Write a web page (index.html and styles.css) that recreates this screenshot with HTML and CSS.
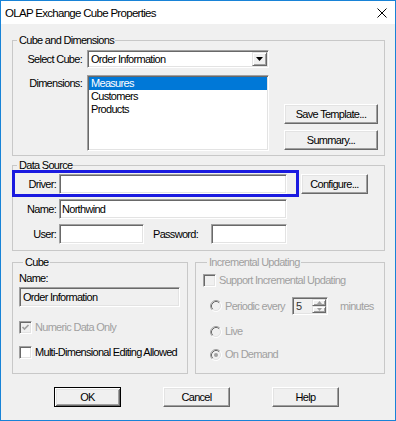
FILE: index.html
```html
<!DOCTYPE html>
<html lang="en">
<head>
  <meta charset="UTF-8" />
  <title>OLAP Exchange Cube Properties</title>
  <link rel="stylesheet" href="styles.css">
</head>
<body>
  <div class="window">
    <div class="titlebar">
      <span class="title">OLAP Exchange Cube Properties</span>
      <svg class="close" width="10" height="10" viewBox="0 0 10 10">
        <path d="M0.5 0.5L9.5 9.5M9.5 0.5L0.5 9.5" stroke="#000" stroke-width="1" fill="none"/>
      </svg>
    </div>

    <div class="client">
      <fieldset class="group group-dims">
        <legend>Cube and Dimensions</legend>
        <div class="dims">
          <div class="dims-grid">
            <label class="lbl">Select Cube:</label>
            <div class="combo sunken">
              <span class="combo-text">Order Information</span>
              <span class="combo-btn raised">
                <svg width="7" height="4" viewBox="0 0 7 4"><path d="M0 0H7L3.5 4Z" fill="#000"/></svg>
              </span>
            </div>
            <label class="lbl lbl-top">Dimensions:</label>
            <ul class="listbox sunken">
              <li class="selected">Measures</li>
              <li>Customers</li>
              <li>Products</li>
            </ul>
          </div>
          <div class="side-buttons">
            <button class="btn btn-wide">Save Template...</button>
            <button class="btn btn-wide">Summary...</button>
          </div>
        </div>
      </fieldset>

      <fieldset class="group group-source">
        <legend>Data Source</legend>
        <div class="source-grid">
          <label class="lbl">Driver:</label>
          <input class="field sunken" type="text" value="">
          <button class="btn btn-configure">Configure...</button>

          <label class="lbl">Name:</label>
          <input class="field sunken" type="text" value="Northwind">
          <span></span>

          <label class="lbl">User:</label>
          <div class="user-row">
            <input class="field field-user sunken" type="text" value="">
            <label class="lbl-pass">Password:</label>
            <input class="field field-pass sunken" type="password" value="">
          </div>
        </div>
      </fieldset>

      <div class="lower">
        <fieldset class="group group-cube">
          <legend>Cube</legend>
          <div class="cube-name">Name:</div>
          <div class="field field-ro sunken">Order Information</div>
          <div class="check-row check-first disabled">
            <span class="check sunken off">
              <svg width="9" height="9" viewBox="0 0 9 9"><path d="M1.5 4L3.5 6L7.5 2" stroke="#a0a0a0" stroke-width="1.7" fill="none"/></svg>
            </span>
            <span>Numeric Data Only</span>
          </div>
          <div class="check-row check-second">
            <span class="check sunken"></span>
            <span>Multi-Dimensional Editing Allowed</span>
          </div>
        </fieldset>

        <fieldset class="group group-inc disabled">
          <legend>Incremental Updating</legend>
          <div class="check-row">
            <span class="check sunken off"></span>
            <span>Support Incremental Updating</span>
          </div>
          <div class="radio-row radio-periodic">
            <svg class="radio" width="12" height="12" viewBox="0 0 12 12">
              <circle cx="6" cy="6" r="5" fill="#f0f0f0"/>
              <path d="M2.11 9.89A5.5 5.5 0 0 1 9.89 2.11" stroke="#a0a0a0" fill="none"/>
              <path d="M9.89 2.11A5.5 5.5 0 0 1 2.11 9.89" stroke="#fff" fill="none"/>
              <path d="M2.82 9.18A4.5 4.5 0 0 1 9.18 2.82" stroke="#696969" fill="none"/>
              <path d="M9.18 2.82A4.5 4.5 0 0 1 2.82 9.18" stroke="#e3e3e3" fill="none"/>
            </svg>
            <span class="periodic-text">Periodic every</span>
            <div class="spin sunken">
              <span class="spin-value">5</span>
              <span class="spin-btns">
                <span class="spin-btn raised"><svg width="5" height="3" viewBox="0 0 5 3"><path d="M0 3H5L2.5 0Z" fill="#a0a0a0"/></svg></span>
                <span class="spin-btn raised"><svg width="5" height="3" viewBox="0 0 5 3"><path d="M0 0H5L2.5 3Z" fill="#a0a0a0"/></svg></span>
              </span>
            </div>
            <span class="minutes">minutes</span>
          </div>
          <div class="radio-row">
            <svg class="radio" width="12" height="12" viewBox="0 0 12 12">
              <circle cx="6" cy="6" r="5" fill="#f0f0f0"/>
              <path d="M2.11 9.89A5.5 5.5 0 0 1 9.89 2.11" stroke="#a0a0a0" fill="none"/>
              <path d="M9.89 2.11A5.5 5.5 0 0 1 2.11 9.89" stroke="#fff" fill="none"/>
              <path d="M2.82 9.18A4.5 4.5 0 0 1 9.18 2.82" stroke="#696969" fill="none"/>
              <path d="M9.18 2.82A4.5 4.5 0 0 1 2.82 9.18" stroke="#e3e3e3" fill="none"/>
            </svg>
            <span>Live</span>
          </div>
          <div class="radio-row">
            <svg class="radio" width="12" height="12" viewBox="0 0 12 12">
              <circle cx="6" cy="6" r="5" fill="#f0f0f0"/>
              <path d="M2.11 9.89A5.5 5.5 0 0 1 9.89 2.11" stroke="#a0a0a0" fill="none"/>
              <path d="M9.89 2.11A5.5 5.5 0 0 1 2.11 9.89" stroke="#fff" fill="none"/>
              <path d="M2.82 9.18A4.5 4.5 0 0 1 9.18 2.82" stroke="#696969" fill="none"/>
              <path d="M9.18 2.82A4.5 4.5 0 0 1 2.82 9.18" stroke="#e3e3e3" fill="none"/>
              <circle cx="6" cy="6" r="2" fill="#a0a0a0"/>
            </svg>
            <span>On Demand</span>
          </div>
        </fieldset>
      </div>

      <div class="actions">
        <button class="btn btn-action btn-default">OK</button>
        <button class="btn btn-action">Cancel</button>
        <button class="btn btn-action">Help</button>
      </div>
    </div>

    <!-- annotation frame around the Driver row -->
    <div class="highlight"></div>
  </div>
</body>
</html>
```

FILE: styles.css
```css
:root {
  --face: #f0f0f0;
  --light: #e3e3e3;
  --shadow: #a0a0a0;
  --dark: #696969;
  --accent: #1883d7;
  --select: #0078d7;
  --disabled: #a0a0a0;
  --group-line: #c8c8c8;
}

* {
  margin: 0;
  padding: 0;
  box-sizing: border-box;
}

html, body {
  width: 396px;
  height: 421px;
  overflow: hidden;
}

body {
  font-family: "Liberation Sans", Arial, sans-serif;
  font-size: 11px;
  letter-spacing: -0.7px;
  color: #000;
  background: #fff;
}

.window {
  position: relative;
  width: 396px;
  height: 421px;
  border: 1px solid var(--accent);
  background: var(--face);
  display: flex;
  flex-direction: column;
}

.titlebar {
  height: 23px;
  flex-shrink: 0;
  background: #fff;
  display: flex;
  align-items: center;
  justify-content: space-between;
  padding: 0 8px 0 4px;
}

.title {
  font-size: 11.5px;
  line-height: 14px;
}

.client {
  display: flex;
  flex-direction: column;
  padding: 10px 10px 0 11px;
}

/* 3d edges */
.sunken {
  border: 1px solid;
  border-color: var(--shadow) #fff #fff var(--shadow);
  box-shadow: inset 1px 1px 0 var(--dark), inset -1px -1px 0 var(--light);
}

.raised {
  border: 1px solid;
  border-color: var(--light) var(--dark) var(--dark) var(--light);
  box-shadow: inset 1px 1px 0 #fff, inset -1px -1px 0 var(--shadow);
  background: var(--face);
}

/* group boxes */
.group {
  border: 1px solid var(--group-line);
  min-width: 0;
}

.group legend {
  margin-left: 4px;
  padding: 0 1px 0 2px;
  line-height: 13px;
}

.lbl {
  text-align: right;
  line-height: 13px;
  align-self: center;
  white-space: nowrap;
}

.lbl-top {
  align-self: start;
  padding-top: 2px;
}

/* cube and dimensions */
.group-dims {
  padding: 3px 0 4px 0;
}

.dims {
  display: flex;
}

.dims-grid {
  display: grid;
  grid-template-columns: 69px 182px;
  column-gap: 5px;
  row-gap: 7px;
}

.combo {
  height: 18px;
  background: #fff;
  display: flex;
  align-items: center;
  justify-content: space-between;
  padding: 1px;
}

.combo-text {
  padding-left: 2px;
  line-height: 13px;
}

.combo-btn {
  width: 15px;
  height: 14px;
  display: flex;
  align-items: center;
  justify-content: center;
}

.listbox {
  list-style: none;
  height: 76px;
  background: #fff;
  padding: 1px;
}

.listbox li {
  height: 13px;
  line-height: 13px;
  padding-left: 2px;
}

.listbox li.selected {
  background: var(--select);
  color: #fff;
}

.side-buttons {
  display: flex;
  flex-direction: column;
  justify-content: flex-end;
  gap: 6px;
  margin-left: 15px;
  padding-bottom: 1px;
}

.btn {
  font: inherit;
  letter-spacing: inherit;
  color: #000;
  height: 20px;
  background: var(--face);
  border: 1px solid;
  border-color: #fff var(--dark) var(--dark) #fff;
  box-shadow: inset -1px -1px 0 var(--shadow), inset 1px 1px 0 var(--light);
}

.btn-wide {
  width: 94px;
}

/* data source */
.group-source {
  margin-top: 3px;
  padding: 2px 0 6px 0;
}

.source-grid {
  display: grid;
  grid-template-columns: 43px 228px 67px;
  grid-auto-rows: 20px;
  column-gap: 3px;
  row-gap: 5px;
}

.field {
  font: inherit;
  letter-spacing: inherit;
  color: #000;
  height: 20px;
  padding: 0 2px;
  background: #fff;
  outline: none;
}

.btn-configure {
  width: 67px;
  margin-left: 11px;
}

.user-row {
  display: flex;
  align-items: center;
}

.field-user {
  width: 85px;
}

.lbl-pass {
  margin-left: 9px;
  line-height: 13px;
}

.field-pass {
  width: 76px;
  margin-left: auto;
}

/* lower groups */
.lower {
  display: flex;
  gap: 7px;
  margin-top: 5px;
}

.group-cube {
  width: 176px;
  padding: 3px 0 14px 6px;
}

.cube-name {
  line-height: 13px;
}

.field-ro {
  width: 161px;
  margin-top: 2px;
  padding: 0 3px;
  line-height: 18px;
  background: var(--face);
}

.check-row {
  display: flex;
  align-items: center;
  gap: 3px;
  height: 13px;
  line-height: 13px;
}

.check-first {
  margin-top: 14px;
}

.check-second {
  margin-top: 12px;
}

.check {
  width: 13px;
  height: 13px;
  flex-shrink: 0;
  background: #fff;
  display: flex;
  align-items: center;
  justify-content: center;
}

.check.off {
  background: var(--face);
}

.disabled {
  color: var(--disabled);
}

.group-inc {
  width: 190px;
  padding: 5px 0 0 7px;
}

.radio-row {
  display: flex;
  align-items: center;
  gap: 3px;
  height: 13px;
  line-height: 13px;
  margin-top: 10px;
  padding-left: 7px;
}

.radio {
  flex-shrink: 0;
}

.radio-periodic {
  height: 18px;
}

.periodic-text {
  width: 64px;
}

.spin {
  width: 36px;
  height: 18px;
  display: flex;
  justify-content: space-between;
  padding: 1px;
  background: var(--face);
  color: #333;
}

.spin-value {
  padding-left: 2px;
  line-height: 14px;
}

.spin-btns {
  display: flex;
  flex-direction: column;
  width: 14px;
}

.spin-btn {
  height: 7px;
  display: flex;
  align-items: center;
  justify-content: center;
}

.minutes {
  margin-left: 9px;
}

/* dialog buttons */
.actions {
  display: flex;
  gap: 42px;
  padding-left: 42px;
  margin-top: 13px;
}

.btn-action {
  width: 67px;
}

.btn-default {
  border-color: #000;
  box-shadow: inset 1px 1px 0 #fff, inset -1px -1px 0 var(--dark), inset 2px 2px 0 var(--light), inset -2px -2px 0 var(--shadow);
}

.highlight {
  position: absolute;
  left: 11px;
  top: 169px;
  width: 287px;
  height: 27px;
  border: 3px solid #1a1ae0;
}
```
